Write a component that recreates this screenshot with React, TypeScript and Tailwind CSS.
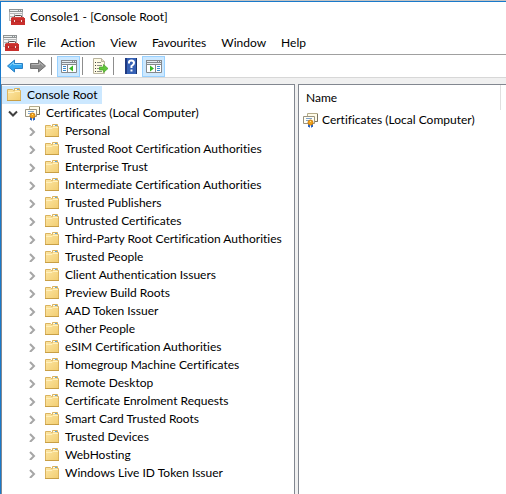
import React from "react";

const folders = [
  "Personal",
  "Trusted Root Certification Authorities",
  "Enterprise Trust",
  "Intermediate Certification Authorities",
  "Trusted Publishers",
  "Untrusted Certificates",
  "Third-Party Root Certification Authorities",
  "Trusted People",
  "Client Authentication Issuers",
  "Preview Build Roots",
  "AAD Token Issuer",
  "Other People",
  "eSIM Certification Authorities",
  "Homegroup Machine Certificates",
  "Remote Desktop",
  "Certificate Enrolment Requests",
  "Smart Card Trusted Roots",
  "Trusted Devices",
  "WebHosting",
  "Windows Live ID Token Issuer",
];

const menus = ["File", "Action", "View", "Favourites", "Window", "Help"];

function ConsoleIcon() {
  return (
    <svg width="16" height="16" viewBox="0 0 16 16" className="shrink-0" aria-hidden="true">
      <path d="M0 0h14v12H0z" fill="#b4b6b7" />
      <path d="M0 0h14v3H0z" fill="#8f9394" />
      <path d="M1 1h8v1H1zM10 1h1v1h-1zM12 1h1v1h-1z" fill="#e9eeee" />
      <path d="M1 3h12v1H1zM1 5h4v2H1zM6 5h7v1H6zM1 8h1v3H1z" fill="#f4f4f4" />
      <path d="M5.500 8V7l1-.5h5l1 .5v1" fill="#f4f4f4" stroke="#5b4c4a" />
      <path d="M3 8h12v1h1v7H2V9h1z" fill="#c92f2c" />
      <path d="M3 8h12v1H3z" fill="#d6453f" />
      <path d="M2 12h14v1H2z" fill="#b82725" />
      <path d="M5 11h1v2H5zM12 11h1v2h-1z" fill="#f3dcd8" />
    </svg>
  );
}

function FolderIcon() {
  return (
    <svg width="16" height="16" viewBox="0 0 16 16" className="shrink-0" aria-hidden="true">
      <defs>
        <linearGradient id="folder" x1="0" y1="0" x2="1" y2="1">
          <stop offset="0" stopColor="#fde7a6" />
          <stop offset="1" stopColor="#f2cd70" />
        </linearGradient>
      </defs>
      <path d="M1.500 13.500V2.500h5l1 1h1v-2h5v2h1v10z" fill="url(#folder)" stroke="#dab35f" />
      <path d="M9 2h4v1H9z" fill="#fffbe8" />
      <path d="M11 2h2v1h-2z" fill="#62a5d8" />
      <path d="M2 5.500h6l1-1h5" fill="none" stroke="#fff0bd" />
      <path d="M1 13h14v1H1z" fill="#c89f45" />
    </svg>
  );
}

function CertificateIcon() {
  return (
    <svg width="16" height="16" viewBox="0 0 16 16" className="shrink-0" aria-hidden="true">
      <path d="M4.500 1.500h10v8h-10z" fill="#fffbe8" stroke="#b5ac8b" />
      <path d="M14.500 2v7.500H11" fill="none" stroke="#77715f" />
      <path d="M.5 4.500h11v7H.5z" fill="#fffef4" stroke="#999380" />
      <path d="M3 6h6v1H3zM3 8h3v1H3z" fill="#7fa3cf" />
      <path d="M5 12h2v4l-1-1H5zM8 12h2v3H9l-1 1z" fill="#2864c4" />
      <circle cx="7.500" cy="10.500" r="2.500" fill="#f0a31a" stroke="#cf7f12" />
      <path d="M7 9h1v1H7z" fill="#ffe894" />
    </svg>
  );
}

function ArrowIcon({ forward = false }: { forward?: boolean }) {
  return (
    <svg width="16" height="16" viewBox="0 0 16 16" aria-hidden="true">
      {forward ? (
        <>
          <path d="M.5 5.500h8V2l7 6-7 6v-3.500h-8z" fill="#8d8d8d" stroke="#737373" />
          <path d="M1.500 6.500h8V4.500L13.500 8" fill="none" stroke="#b8b8b8" />
        </>
      ) : (
        <>
          <path d="M15.500 5.500h-8V2l-7 6 7 6v-3.500h8z" fill="#2fa4ef" stroke="#2a80c4" />
          <path d="M14.500 6.500h-8V4.500L2.500 8" fill="none" stroke="#8bd6fa" />
        </>
      )}
    </svg>
  );
}

function PaneIcon({ right = false }: { right?: boolean }) {
  return (
    <svg width="16" height="16" viewBox="0 0 16 16" aria-hidden="true">
      <path d="M.5 2.500h15v12H.5z" fill="#fff" stroke="#85898d" />
      <path d="M0 2h16v5H0z" fill="#85898d" />
      <path d="M1 3h10v1H1zM12 3h1v1h-1zM14 3h1v1h-1zM1 5h14v1H1z" fill="#e5edf2" />
      {right ? (
        <>
          <path d="M9 7h1v7H9z" fill="#85898d" />
          <path d="M4 7.500v6l4-3z" fill="#36b923" />
          <path d="M11 8h3v1h-3zM11 10h3v1h-3zM11 12h3v1h-3z" fill="#398bd0" />
        </>
      ) : (
        <>
          <path d="M6 7h1v7H6z" fill="#85898d" />
          <path d="M12 7.500v6l-4-3z" fill="#36b923" />
          <path d="M2 8h3v1H2zM2 10h3v1H2zM2 12h3v1H2z" fill="#398bd0" />
        </>
      )}
    </svg>
  );
}

function ExportIcon() {
  return (
    <svg width="16" height="16" viewBox="0 0 16 16" aria-hidden="true">
      <path d="M1.500.5h8l3 3v12h-11z" fill="#fffbe4" stroke="#b9b49e" />
      <path d="M9.500.5v3h3" fill="#e8e1c4" stroke="#b9b49e" />
      <path d="M3 4h1v1H3zM3 7h1v1H3zM3 10h1v1H3zM3 13h1v1H3z" fill="#444" />
      <path d="M5 4h4v1H5zM5 7h5v1H5zM5 10h3v1H5zM5 13h5v1H5z" fill="#8d8d88" />
      <path d="M7.500 9h4V6.500L16 10.500l-4.500 4V12h-4z" fill="#62c63b" stroke="#43a322" strokeWidth=".7" />
    </svg>
  );
}

function HelpIcon() {
  return (
    <svg width="16" height="16" viewBox="0 0 16 16" aria-hidden="true">
      <path d="M2 0h12v16H2z" fill="#3560b4" />
      <path d="M2 0h2v16H2z" fill="#203b82" />
      <path d="M13 0h1v16h-1z" fill="#18346f" />
      <path d="M6 5.500V4q0-1.500 2.500-1.500T11 5q0 1.500-2.500 3v2" fill="none" stroke="#fff" strokeWidth="2" />
      <path d="M7.500 11.500h2v2h-2z" fill="#fff" />
    </svg>
  );
}

function Chevron({ open = false }: { open?: boolean }) {
  return (
    <svg width="10" height="10" viewBox="0 0 10 10" aria-hidden="true">
      {open ? (
        <path d="M1 3.500l4 4 4-4" fill="none" stroke="#404040" strokeWidth="2" />
      ) : (
        <path d="M3 2l4 4-4 4" fill="none" stroke="#a6a6a6" strokeWidth="2" />
      )}
    </svg>
  );
}

function ToolButton({
  label,
  active = false,
  children,
}: {
  label: string;
  active?: boolean;
  children: React.ReactNode;
}) {
  return (
    <button
      type="button"
      aria-label={label}
      className={
        active
          ? "flex h-[21px] w-[23px] items-center justify-center border border-[#99d1ff] bg-[#cce8ff]"
          : "flex h-[21px] w-[23px] items-center justify-center border border-transparent"
      }
    >
      {children}
    </button>
  );
}

function Separator() {
  return <span className="mr-[5px] ml-0.5 h-[18px] w-px bg-[#8d8d8d]" />;
}

export default function App() {
  return (
    <div className="flex min-h-screen flex-col overflow-hidden border-t border-t-[#c4c4c4] bg-[#f0f0f0] font-['Lato','Open_Sans',sans-serif] text-xs leading-[18px] text-black [font-variant-ligatures:none]">
      <div className="flex grow flex-col border-t border-l border-[#1979ca]">
        <header className="bg-white">
          <div className="flex h-[30px] items-center gap-[5px] pl-2">
            <ConsoleIcon />
            <h1>Console1 - [Console Root]</h1>
          </div>
          <nav className="flex h-[22px] items-center pl-0.5">
            <ConsoleIcon />
            <div className="flex gap-px pl-px">
              {menus.map((menu) => (
                <button key={menu} type="button" className="px-[7px]">
                  {menu}
                </button>
              ))}
            </div>
          </nav>
        </header>
        <div className="flex h-6 items-center border-y border-t-[#a0a0a0] border-b-[#d7d7d7] bg-white pl-0.5" role="toolbar">
          <ToolButton label="Back"><ArrowIcon /></ToolButton>
          <ToolButton label="Forward"><ArrowIcon forward /></ToolButton>
          <Separator />
          <ToolButton label="Show console tree" active><PaneIcon /></ToolButton>
          <Separator />
          <ToolButton label="Export list"><ExportIcon /></ToolButton>
          <Separator />
          <ToolButton label="Help"><HelpIcon /></ToolButton>
          <ToolButton label="Show action pane" active><PaneIcon right /></ToolButton>
        </div>
        <main className="flex grow gap-[3px] pt-1.5">
          <section aria-label="Console tree" className="w-[294px] shrink-0 border border-b-0 border-[#828790] bg-white pt-px">
            <div className="flex">
              <button type="button" className="flex h-[18px] items-center gap-[5px] bg-[#cce8ff] pr-1 pl-1">
                <FolderIcon />
                Console Root
              </button>
            </div>
            <button type="button" aria-expanded="true" className="flex h-[18px] items-center pl-1.5">
              <Chevron open />
              <span className="flex items-center gap-[5px] pl-[7px]">
                <CertificateIcon />
                Certificates (Local Computer)
              </span>
            </button>
            <ul className="pl-[25px]">
              {folders.map((name) => (
                <li key={name}>
                  <button type="button" aria-expanded="false" className="flex h-[18px] items-center whitespace-nowrap">
                    <Chevron />
                    <span className="flex items-center gap-[5px] pl-[7px]">
                      <FolderIcon />
                      {name}
                    </span>
                  </button>
                </li>
              ))}
            </ul>
          </section>
          <section aria-label="Contents" className="min-w-0 grow border border-r-0 border-b-0 border-[#828790] bg-white">
            <table className="w-full border-collapse text-left">
              <thead>
                <tr>
                  <th className="h-[25px] w-[201px] border-r border-[#e0e0e0] pl-[7px] font-normal">Name</th>
                  <th aria-label="Actions" />
                </tr>
              </thead>
              <tbody>
                <tr>
                  <td colSpan={2} className="h-5 pl-1">
                    <span className="flex items-center gap-[3px]">
                      <CertificateIcon />
                      Certificates (Local Computer)
                    </span>
                  </td>
                </tr>
              </tbody>
            </table>
          </section>
        </main>
      </div>
    </div>
  );
}
